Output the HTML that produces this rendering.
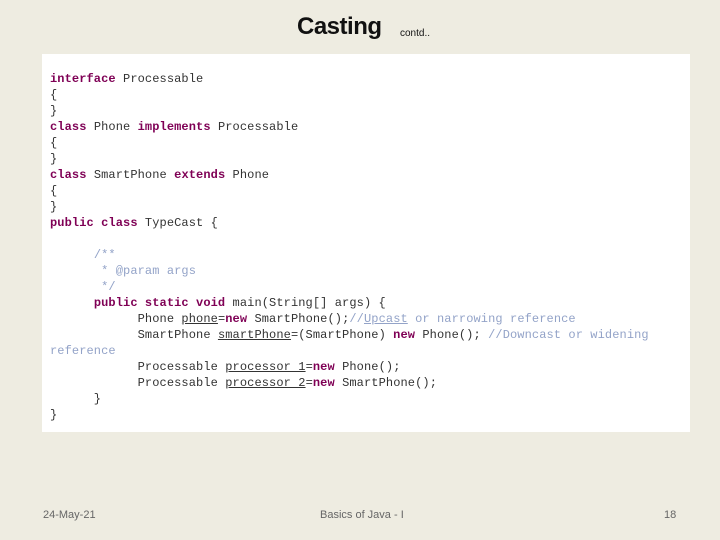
<!DOCTYPE html>
<html><head><meta charset="utf-8"><style>
body{margin:0;width:720px;height:540px;background:#eeece1;position:relative;overflow:hidden;font-family:"Liberation Sans",sans-serif}
.t{position:absolute;left:297px;top:13px;font-size:24px;color:#111;font-weight:bold;letter-spacing:-0.5px}
.c{position:absolute;left:400px;top:28px;font-size:10px;color:#111}
.box{position:absolute;left:42px;top:54px;width:648px;height:378px;background:#fff}
pre{position:absolute;left:50px;top:71px;margin:0;font-family:"Liberation Mono",monospace;font-size:12px;line-height:16px;color:#333;letter-spacing:0.1px}
.k{color:#7f0055;font-weight:bold}
.m{color:#93a3c8}
.u{text-decoration:underline}
.f{position:absolute;top:509px;font-size:11px;color:#666}
</style></head><body>
<div class="t">Casting</div><div class="c">contd..</div>
<div class="box"></div>
<pre><span class="k">interface</span> Processable
{
}
<span class="k">class</span> Phone <span class="k">implements</span> Processable
{
}
<span class="k">class</span> SmartPhone <span class="k">extends</span> Phone
{
}
<span class="k">public class</span> TypeCast {

      <span class="m">/**</span>
<span class="m">       * @param args</span>
<span class="m">       */</span>
      <span class="k">public static void</span> main(String[] args) {
            Phone <span class="u">phone</span>=<span class="k">new</span> SmartPhone();<span class="m">//<span class="u">Upcast</span> or narrowing reference</span>
            SmartPhone <span class="u">smartPhone</span>=(SmartPhone) <span class="k">new</span> Phone(); <span class="m">//Downcast or widening</span>
<span class="m">reference</span>
            Processable <span class="u">processor 1</span>=<span class="k">new</span> Phone();
            Processable <span class="u">processor 2</span>=<span class="k">new</span> SmartPhone();
      }
}</pre>
<div class="f" style="left:43px">24-May-21</div>
<div class="f" style="left:320px">Basics of Java - I</div>
<div class="f" style="left:664px">18</div>
</body></html>
